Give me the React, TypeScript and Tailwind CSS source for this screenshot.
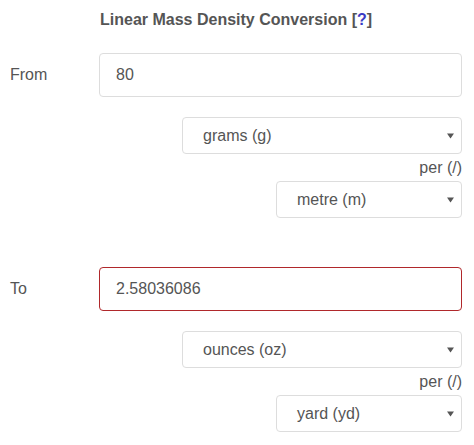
import React from "react";

function Select({ label, width }: { label: string; width: string }) {
  return (
    <div
      className={`relative flex items-center h-[37px] ${width} border border-[#dddddd] rounded-[4px] bg-white pl-[20px]`}
    >
      <span>{label}</span>
      <svg
        className="absolute right-[7px] top-1/2 -translate-y-1/2"
        width="7"
        height="6"
        viewBox="0 0 7 6"
      >
        <path d="M0 0.5 H7 L3.5 5.5 Z" fill="#555555" />
      </svg>
    </div>
  );
}

function Block({
  label,
  value,
  unit,
  per,
  error,
}: {
  label: string;
  value: string;
  unit: string;
  per: string;
  error?: boolean;
}) {
  return (
    <div className="flex flex-col">
      <div className="flex items-center">
        <div className="w-[99px] pl-[10px]">{label}</div>
        <div
          className={`flex-1 h-[44px] flex items-center pl-[16px] rounded-[4px] border ${
            error ? "border-[#b0282b]" : "border-[#dddddd]"
          }`}
        >
          {value}
        </div>
      </div>
      <div className="flex flex-col items-end mt-[20px]">
        <Select label={unit} width="w-[280px]" />
        <div className="h-[27px] flex items-center leading-none pt-[1px]">per (/)</div>
        <Select label={per} width="w-[186px]" />
      </div>
    </div>
  );
}

export default function App() {
  return (
    <div
      className="w-[474px] h-[445px] bg-white text-[#555555] text-[16px] pr-[12px]"
      style={{ fontFamily: '"Liberation Sans", Arial, sans-serif' }}
    >
      <div className="pl-[100px] pt-[8px] h-[53px] text-[16px] leading-[24px] font-bold">
        Linear Mass Density Conversion [<span className="text-[#3b3bc4]">?</span>]
      </div>
      <Block label="From" value="80" unit="grams (g)" per="metre (m)" />
      <div className="h-[49px]" />
      <Block label="To" value="2.58036086" unit="ounces (oz)" per="yard (yd)" error />
    </div>
  );
}
